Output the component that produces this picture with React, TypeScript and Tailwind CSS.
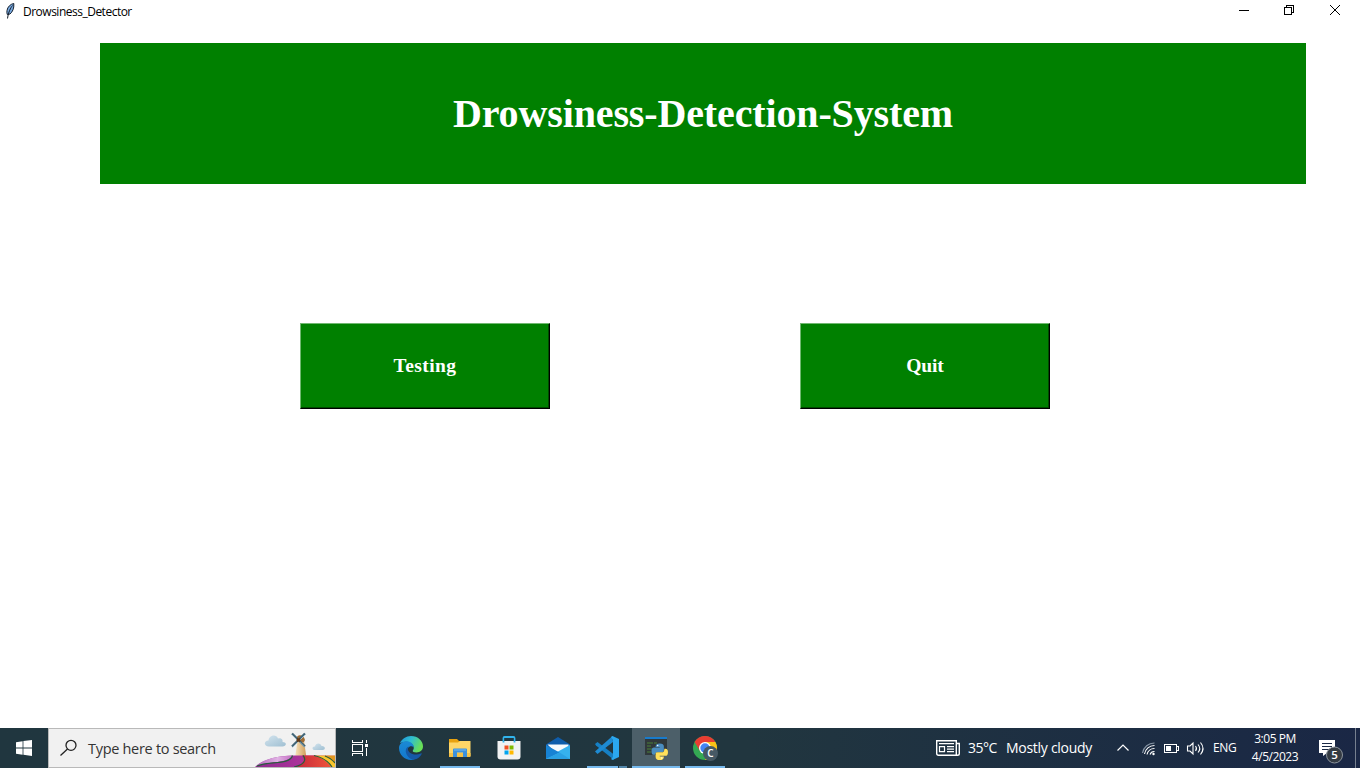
import type { ReactNode } from 'react';

const UI = "font-['Open_Sans','Noto_Sans',sans-serif]";

function Feather() {
  return (
    <svg width="16" height="20" viewBox="0 0 16 20">
      <path d="M11.800 3.500C8.500 4 5.400 7 5 10.500c-.2 1.700-.2 2.700.3 4L8 14c2.400-2 4.300-5.600 3.800-10.500z" fill="#78a9e0" stroke="#15202e" strokeWidth="1" />
      <path d="M10.500 5.500C8.600 8 6.500 11.500 5.500 18.500" fill="none" stroke="#111a26" strokeWidth="1" />
    </svg>
  );
}

function TitleBar() {
  return (
    <header className="flex h-[22px] items-center">
      <div className="ml-[2px] flex h-[22px] w-[21px]"><Feather /></div>
      <span className="grow pt-[2px] text-[12px] leading-[22px] tracking-[-0.5px] text-black">Drowsiness_Detector</span>
      <svg width="140" height="22" viewBox="0 0 140 22" fill="none" stroke="#000" shapeRendering="crispEdges">
        <path d="M19 10.500h10M64.500 7.500h7v7h-7zM66.500 7V5.500h7v7H72" />
        <path d="M110 5l10 10M120 5l-10 10" shapeRendering="auto" />
      </svg>
    </header>
  );
}

function BevelButton({ label, tracking }: { label: string; tracking: string }) {
  return (
    <button className="h-[86px] w-[250px] border border-b-black border-l-[#70b870] border-r-black border-t-[#70b870] bg-[#008000]">
      <span className={`flex h-full items-center justify-center border-b border-r border-[#004b00] pl-px font-['Liberation_Serif',serif] text-[19.5px] font-bold leading-[24px] text-white ${tracking}`}>{label}</span>
    </button>
  );
}

function SearchArt() {
  return (
    <svg width="80" height="38" viewBox="0 0 80 38">
      <defs>
        <linearGradient id="cloud" x1="0" y1="0" x2="1" y2="1">
          <stop offset="0" stopColor="#d3e4ee" /><stop offset="1" stopColor="#9fbfd2" />
        </linearGradient>
        <linearGradient id="tower"><stop stopColor="#f8e3bb" /><stop offset="1" stopColor="#cf9c58" /></linearGradient>
        <linearGradient id="lilac"><stop stopColor="#b463bb" /><stop offset=".6" stopColor="#e0b2e4" /><stop offset="1" stopColor="#c46fc4" /></linearGradient>
        <linearGradient id="plum"><stop stopColor="#8c2a8e" /><stop offset="1" stopColor="#c33aa4" /></linearGradient>
        <linearGradient id="red"><stop stopColor="#c5283b" /><stop offset="1" stopColor="#f0553a" /></linearGradient>
      </defs>
      <path d="M14 17.500c-5.500 0-5.500-6-.5-6 .5-5 7.500-7 9.500-2 4-1 5 2 4.500 3.500 5 0 4 4.500 0 4.500z" fill="url(#cloud)" />
      <path d="M60 21c-3.500 0-3-4 0-3.500.5-4 6-4 6.500-.5 4-.5 4.500 4 1 4z" fill="url(#cloud)" />
      <path d="M42.500 12h6.500l2.500 17H40z" fill="url(#tower)" />
      <path d="M41.500 10c0-5 7-5 8.500 1l-1 2h-6.500z" fill="#a06c34" />
      <path d="M0 38C6 32 20 26.500 38 26.500h42V38z" fill="url(#plum)" />
      <path d="M1 37C9 30 22 27 37 26.800 36 32 22 33 14 34q-7 1-13 3z" fill="url(#lilac)" />
      <path d="M41 38c7-3 10-7.500 6-11.500h12c9 2 14 5 18 11.500z" fill="url(#red)" />
      <path d="M59 26.500h21V38h-4c-4-6-9-9-17-11.500z" fill="#f9c62b" />
      <path d="M69 27q7 2 11 8v-8z" fill="#e3981f" />
      <path d="M2 37c12-5 33-1 35.500-10.500M39 38c10-2 13-7 9-11.500M59 26.500c9 2 14 5 18 11.500M70 27q6 2 10 7" fill="none" stroke="#285c3d" strokeWidth="1.200" />
      <path d="M37 4.500l13 13M50 4.500l-13 13" stroke="#436678" strokeWidth="2.300" />
      <path d="M36.500 5.500l6 6M50.500 5.500l-6 6M37.500 18.500l6-6M44 12.500l6 6" stroke="#b5cdd5" strokeWidth=".8" />
      <path d="M42 9.500l3 3M45 9.500l-3 3" stroke="#613714" strokeWidth="1.800" />
    </svg>
  );
}

function EdgeIcon() {
  return (
    <svg width="24" height="24" viewBox="0 0 24 24">
      <defs>
        <linearGradient id="eg" x1="0" y1="0" x2="1" y2=".4"><stop stopColor="#1c92dc" /><stop offset=".5" stopColor="#30bed0" /><stop offset="1" stopColor="#68df57" /></linearGradient>
        <linearGradient id="eb" x1="0" y1="0" x2="0" y2="1"><stop stopColor="#1b8ad4" /><stop offset="1" stopColor="#1377cd" /></linearGradient>
      </defs>
      <path d="M1 7C3 3 7 0 12 0c7 0 12 5 12 10.300 0 4-3 6.200-6.500 6.200-2.500 0-4.300-.8-3.700-2 .8-1 1-1.800 1-2.700C14.800 8 10 5.500 6 5.800z" fill="url(#eg)" />
      <path d="M0 12c0-3.500 3-6.700 7.500-6.700 4 0 7.300 2.700 7.300 6.300-1.500-2-4.300-2-5.800.4C6 16 9 22 16 23.300 8 26 0 20 0 12z" fill="url(#eb)" />
      <path d="M9.500 10.500C4 13 7.500 23 15 23.600c3.500-.6 6.300-2.500 7.700-5.600.3-.8-.3-1-1-.6-5 2.500-12 .3-12.800-4-.2-1 .1-2 .6-2.900z" fill="#1559a7" />
    </svg>
  );
}

function FolderIcon() {
  return (
    <svg width="24" height="24" viewBox="0 0 24 24">
      <path d="M1 3h8l2 2h11v16H1z" fill="#e9a20f" />
      <path d="M1 6.500h9L12 5h10.500v15.500H1z" fill="#ffd667" />
      <path d="M1 17h21.500v3.500H1z" fill="#f6c246" />
      <path d="M5 21v-7.500q0-1 1-1h12q1 0 1 1V21h-4v-4.500H9V21z" fill="#3c91dd" />
      <path d="M6 14h12" stroke="#75b9ef" />
    </svg>
  );
}

function StoreIcon() {
  return (
    <svg width="24" height="24" viewBox="0 0 24 24">
      <path d="M.5 5h23v15.500q0 3-3 3h-17q-3 0-3-3z" fill="#f1f2f3" />
      <path d="M6.500 6.500V2q0-1 1-1h9q1 0 1 1v4.500" fill="none" stroke="#31b4ed" strokeWidth="1.800" />
      <path d="M7.500 5V2h9v3z" fill="#22373f" />
      <path d="M7.500 9.500h4v4h-4z" fill="#f25022" /><path d="M12.500 9.500h4v4h-4z" fill="#7fba00" />
      <path d="M7.500 14.500h4v4h-4z" fill="#00a4ef" /><path d="M12.500 14.500h4v4h-4z" fill="#ffb900" />
    </svg>
  );
}

function MailIcon() {
  return (
    <svg width="24" height="24" viewBox="0 0 24 24">
      <path d="M0 8.500L12 1l12 7.500V22H0z" fill="#0f5dab" />
      <path d="M1.500 8.500h21v6L12 19z" fill="#f7fafc" />
      <path d="M24 9v14H0v-1z" fill="#36b1ee" />
      <path d="M0 9l13.500 7.500L0 23z" fill="#1782d4" />
      <path d="M0 23l13.500-6.500L24 23z" fill="#2aa0e4" />
    </svg>
  );
}

function CodeIcon() {
  return (
    <svg width="24" height="24" viewBox="0 0 24 24">
      <path d="M0 8l2.500-2L19 18.500V24L1 9.500z" fill="#1680c5" />
      <path d="M17.500 0L0 15.500 2.500 18 18 6z" fill="#1e8bd3" />
      <path d="M17.500 0L24 3v18l-6.500 3-1.500-1 2-2V4l-2-3z" fill="#2ba8f0" />
    </svg>
  );
}

function PythonIcon() {
  return (
    <svg width="24" height="24" viewBox="0 0 24 24">
      <path d="M1 1h22v18H1z" fill="#30383b" /><path d="M1 1h22v2H1z" fill="#187bcc" />
      <path d="M3 7h6M3 10h4M10 7h3M3 13h6M3 16h4" stroke="#42683a" strokeWidth="1.400" />
      <g transform="translate(7.500 7.500) scale(1.030)">
        <path d="M4 3q0-3 4-3t4 3v3.500q0 2-2 2H6q-2.500 0-2.500 2.500H2.300Q0 11 0 7.500T2.500 4H8v-.7H4z" fill="#4b8dbf" />
        <path d="M12 13q0 3-4 3t-4-3V9.500q0-1 2-1h4q2.500 0 2.500-3.500h1.200Q16 5 16 8.500T13.500 12H8v.7h4z" fill="#ffe05b" />
        <circle cx="6" cy="1.900" r=".7" fill="#fff" /><circle cx="10" cy="14.100" r=".7" fill="#fff" />
      </g>
    </svg>
  );
}

function ChromeIcon() {
  return (
    <svg width="25" height="25" viewBox="0 0 25 25">
      <circle cx="12" cy="12" r="12" fill="#34a853" />
      <path d="M1.600 6A12 12 0 0 1 22.400 6H12v6l-5 3z" fill="#e93d32" />
      <path d="M12 6h10.400A12 12 0 0 1 12 24l5.500-9z" fill="#fbc116" />
      <circle cx="12" cy="12" r="6" fill="#fff" /><circle cx="12" cy="12" r="4.700" fill="#4285f4" />
      <circle cx="17.500" cy="17.500" r="7.500" fill="#465965" />
      <text x="17.500" y="21" textAnchor="middle" fill="#fff" className="font-['Open_Sans',sans-serif] text-[10px] font-semibold">C</text>
    </svg>
  );
}

function AppCell({ children, active = false, open = false, split = false }: { children: ReactNode; active?: boolean; open?: boolean; split?: boolean }) {
  return (
    <div className={`flex h-10 w-12 shrink-0 flex-col items-center ${active ? 'bg-[#4c5f69]' : ''}`}>
      <div className="flex h-[38px] items-center pt-[2px]">{children}</div>
      <div className={`flex h-[2px] justify-end ${active ? 'w-12' : 'w-10'} ${open ? 'bg-[#76b9ed]' : ''}`}>
        {split && <div className="h-[2px] w-[9px] border-l border-[#233740] bg-[#5286aa]" />}
      </div>
    </div>
  );
}

function Tray() {
  return (
    <svg width="92" height="40" viewBox="0 0 92 40" fill="none" stroke="#fff">
      <path d="M1.500 22.500L7 17l5.500 5.500" strokeWidth="1.200" />
      <g strokeWidth="1.100">
        <path d="M26.500 25A12 12 0 0 1 38.500 15" stroke="#8795a5" />
        <path d="M28.500 26A10 10 0 0 1 38.500 17.500M31 26.500A7.500 7.500 0 0 1 38.500 20.500M34 26.500A4.500 4.500 0 0 1 38.500 23.500" />
      </g>
      <circle cx="37.500" cy="26" r="1.200" fill="#fff" stroke="none" />
      <g shapeRendering="crispEdges"><path d="M48.500 16.500h12v8h-12zM61 18.500h1.500v4H61" /><path d="M50 18h5v5h-5z" fill="#fff" stroke="none" /></g>
      <path d="M71.500 18h2.500l3-3v11l-3-3h-2.500zM79.500 18q2 2.500 0 5M82 16.500q3.500 4 0 8M84.500 14.500q5 6 0 12" strokeWidth="1.100" />
    </svg>
  );
}

function Taskbar() {
  return (
    <footer className={`flex h-10 bg-linear-to-r from-[#20363f] via-[#21363f] via-55% to-[#1a2745] text-white ${UI}`}>
      <div className="flex w-12 items-center justify-center">
        <svg width="16" height="16" viewBox="0 0 16 16" fill="#fff"><path d="M0 2.200L6.600 1.300v6.200H0zM7.400 1.100L16 0v7.500H7.400zM0 8.400h6.600v6.300L0 13.800zM7.400 8.400H16V16l-8.600-1.200z" /></svg>
      </div>
      <div className="flex w-[288px] items-center border border-[#b9b9b9] bg-[#f1f1f1]">
        <svg className="ml-[10px]" width="20" height="20" viewBox="0 0 20 20" fill="none" stroke="#222" strokeWidth="1.300"><circle cx="12" cy="7.300" r="5" /><path d="M8.500 11L1.500 17.500" /></svg>
        <span className="ml-[9px] w-[167px] whitespace-nowrap pt-px text-[14.500px] leading-5 tracking-[-0.3px] text-[#343434]">Type here to search</span>
        <SearchArt />
      </div>
      <div className="flex w-[51px] items-center pl-[15px]">
        <svg width="18" height="16" viewBox="0 0 18 16" fill="none" stroke="#fff" shapeRendering="crispEdges">
          <path d="M1.500 0v2.500h10V0M1.500 4.500h10v7h-10zM1.500 16v-2.500h10V16M15.500 0v3M15.500 8v8" />
          <path d="M14 4h3v3h-3z" fill="#fff" stroke="none" />
        </svg>
      </div>
      <div className="flex gap-px">
        <AppCell><EdgeIcon /></AppCell>
        <AppCell open><FolderIcon /></AppCell>
        <AppCell><StoreIcon /></AppCell>
        <AppCell><MailIcon /></AppCell>
        <AppCell open split><CodeIcon /></AppCell>
        <AppCell open active><PythonIcon /></AppCell>
        <AppCell open><ChromeIcon /></AppCell>
      </div>
      <div className="ml-[207px] flex w-[180px] items-center">
        <svg width="24" height="16" viewBox="0 0 24 16" fill="none" stroke="#fff" strokeWidth="1.400">
          <path d="M.7.7h19.600v14.600H2.500Q.7 15.300.7 13.500zM20.300 3.500h3v10q0 1.800-1.800 1.800h-2" />
          <path d="M3.500 6.700h5v5h-5zM3 3.700h15M11 6.700h7M11 9.200h7M11 11.700h7" strokeWidth="1.200" />
        </svg>
        <span className="ml-2 w-[38px] whitespace-nowrap text-[14px] leading-5 tracking-[-0.5px]">35°C</span>
        <span className="whitespace-nowrap text-[14px] leading-5 tracking-[-0.28px]">Mostly cloudy</span>
      </div>
      <Tray />
      <div className="ml-[5px] flex w-[34px] items-center text-[12px] leading-5 tracking-[-0.4px]">ENG</div>
      <div className="flex w-[56px] flex-col items-center whitespace-nowrap pt-[2px] text-[12px] leading-[18px] tracking-[-0.45px]">
        <span>3:05 PM</span><span>4/5/2023</span>
      </div>
      <svg className="ml-[16px] shrink-0" width="36" height="40" viewBox="0 0 36 40">
        <path d="M0 12h16v13H8l-4 3v-3H0z" fill="#fff" />
        <path d="M3 15.500h10M3 18.500h10M3 21.500h7" stroke="#1b2945" />
        <circle cx="15.500" cy="27" r="8" fill="#343b43" stroke="#8c949c" />
        <text x="15.500" y="31.200" textAnchor="middle" fill="#fff" className="text-[11.500px] font-semibold">5</text>
      </svg>
      <div className="h-10 w-px bg-[#76808f]" />
    </footer>
  );
}

export default function App() {
  return (
    <div className={`flex h-[768px] w-[1360px] flex-col overflow-hidden bg-white ${UI}`}>
      <TitleBar />
      <main className="grow pt-[21px]">
        <h1 className="ml-[100px] flex h-[141px] w-[1206px] items-center justify-center bg-[#008000] pt-px font-['Liberation_Serif',serif] text-[40px] font-bold leading-[46px] tracking-[-0.13px] text-white">Drowsiness-Detection-System</h1>
        <div className="ml-[300px] mt-[139px] flex gap-[250px]">
          <BevelButton label="Testing" tracking="tracking-[0.4px]" />
          <BevelButton label="Quit" tracking="tracking-[-0.1px]" />
        </div>
      </main>
      <Taskbar />
    </div>
  );
}
